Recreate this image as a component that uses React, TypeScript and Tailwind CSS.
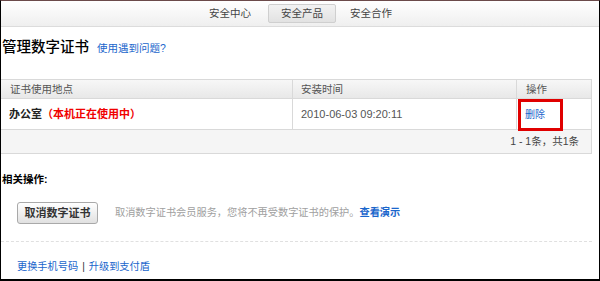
import React from 'react';

const font = 'font-["Liberation_Sans","Noto_Sans_CJK_SC",sans-serif]';

export default function App() {
    return (
        <div
            className={`w-[600px] h-[281px] overflow-hidden bg-white border-l border-r border-b-2 border-t border-black border-t-[#6b4a4a] ${font}`}
        >
            {/* top nav */}
            <div className="h-[26px] flex items-center justify-center border-b border-[#dcdcdc] bg-gradient-to-b from-white to-[#efefef] text-[10.5px] text-[#444]">
                <span className="mr-[17px] ml-[1px]">安全中心</span>
                <span className="h-[19px] px-[12px] flex items-center rounded-[2px] border border-[#cfcfcf] bg-gradient-to-b from-[#f2f2f2] to-[#e2e2e2]">
                    安全产品
                </span>
                <span className="ml-[14px]">安全合作</span>
            </div>

            {/* title */}
            <div className="h-[52px] pt-[10px] pl-[1px] flex items-baseline">
                <h1 className="text-[14.5px] leading-[20px] font-medium text-black">管理数字证书</h1>
                <a href="/" className="ml-[8px] text-[10.5px] text-[#1a66cc]">
                    使用遇到问题?
                </a>
            </div>

            {/* certificate table */}
            <div className="w-[591px] border-t border-r border-[#d9d9d9] text-[10.5px]">
                <div className="flex h-[19px] border-b border-[#d9d9d9] bg-gradient-to-b from-[#f7f7f7] to-[#e8e8e8] text-[#555] leading-[19px]">
                    <div className="w-[292px] pl-[9px] border-r border-[#d9d9d9]">证书使用地点</div>
                    <div className="w-[224px] pl-[8px] border-r border-[#d9d9d9]">安装时间</div>
                    <div className="flex-1 pl-[9px]">操作</div>
                </div>
                <div className="flex h-[31px] border-b border-[#d9d9d9] items-stretch">
                    <div className="w-[292px] pl-[8px] border-r border-[#d9d9d9] flex items-center font-bold text-[11px]">
                        <span className="text-[#222]">办公室</span>
                        <span className="text-[#f00000]">（本机正在使用中）</span>
                    </div>
                    <div className="w-[224px] pl-[8px] border-r border-[#d9d9d9] flex items-center text-[11px] text-[#555]">
                        2010-06-03 09:20:11
                    </div>
                    <div className="flex-1 relative flex items-center pl-[8px]">
                        <a href="/" className="text-[#1a66cc] text-[10px]">
                            删除
                        </a>
                        <div className="absolute left-[1px] top-[0px] w-[45px] h-[32px] border-[3px] border-[#e00000]" />
                    </div>
                </div>
                <div className="h-[24px] border-b border-[#d9d9d9] bg-[#f5f5f5] flex items-center justify-end pr-[12px] text-[10.5px] text-[#444]">
                    1 - 1条，共1条
                </div>
            </div>

            {/* related actions */}
            <div className="mt-[18px] pl-[1px] text-[10.5px] leading-[14px] font-bold text-black">相关操作:</div>
            <div className="mt-[16px] pl-[16px] flex items-center">
                <button
                    type="button"
                    className="w-[81px] h-[22px] rounded-[3px] border border-[#a9a9a9] bg-gradient-to-b from-white to-[#e1e1e1] text-[11px] font-bold text-[#333]"
                >
                    取消数字证书
                </button>
                <p className="ml-[17px] text-[10.2px] text-[#a0a0a0]">
                    取消数字证书会员服务，您将不再受数字证书的保护。
                    <a href="/" className="text-[#1a66cc] font-bold">
                        查看演示
                    </a>
                </p>
            </div>
            <div className="mt-[17px] w-[591px] border-t border-dashed border-[#e0e0e0]" />
            <div className="mt-[18px] pl-[16px] text-[10.2px] leading-[14px] text-[#1a66cc]">
                <a href="/">更换手机号码</a>
                <span className="mx-[4px] text-[#333]">|</span>
                <a href="/">升级到支付盾</a>
            </div>
        </div>
    );
}
